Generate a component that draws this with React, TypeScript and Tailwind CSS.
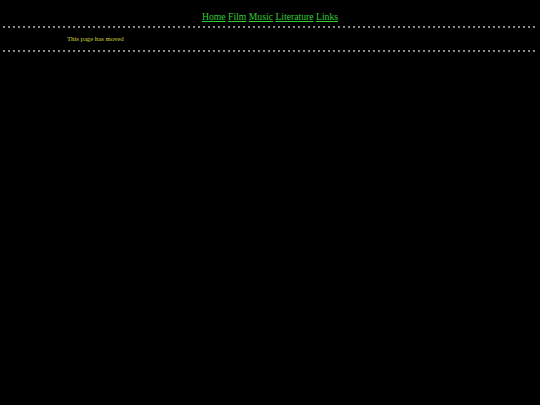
import React from "react";

function Dots() {
  return (
    <div className="mx-[3px] h-[2px] bg-[linear-gradient(to_right,#8c8c8c_2px,transparent_2px)] bg-[length:5px_2px] bg-repeat-x" />
  );
}

export default function App() {
  const links = ["Home", "Film", "Music", "Literature", "Links"];
  return (
    <div className="min-h-[405px] bg-black font-['Liberation_Serif',serif]">
      <div className="pt-[10px] text-center text-[9.7px] leading-[13px]">
        {links.map((l, i) => (
          <React.Fragment key={l}>
            <a href="#" className="text-[#33cc33] underline">
              {l}
            </a>
            {i < links.length - 1 ? " " : ""}
          </React.Fragment>
        ))}
      </div>
      <div className="pt-[3px]">
        <Dots />
      </div>
      <div className="pl-[67px] pt-[6px] pb-[6px] text-[6.7px] leading-[10px] text-[#d2d23c]">
        This page has moved
      </div>
      <Dots />
    </div>
  );
}
